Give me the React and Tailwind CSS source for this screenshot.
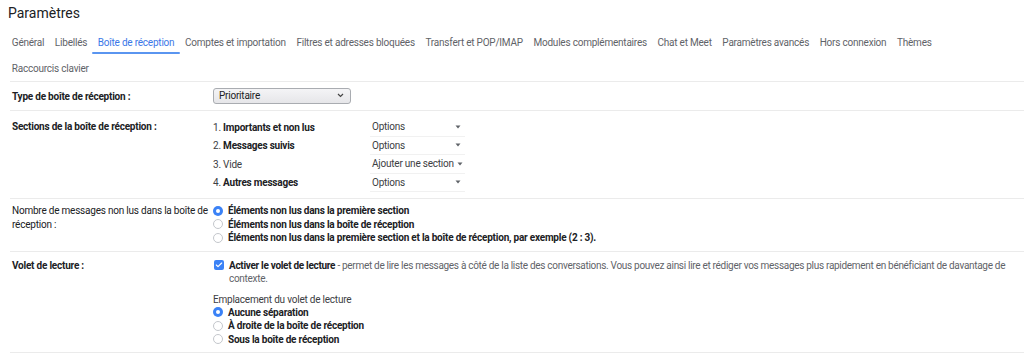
import { Check } from 'lucide-react';

const tabs = [
    'Général',
    'Libellés',
    'Boîte de réception',
    'Comptes et importation',
    'Filtres et adresses bloquées',
    'Transfert et POP/IMAP',
    'Modules complémentaires',
    'Chat et Meet',
    'Paramètres avancés',
    'Hors connexion',
    'Thèmes',
];

const sections = [
    { n: '1.', label: 'Importants et non lus', bold: true, action: 'Options' },
    { n: '2.', label: 'Messages suivis', bold: true, action: 'Options' },
    { n: '3.', label: 'Vide', bold: false, action: 'Ajouter une section' },
    { n: '4.', label: 'Autres messages', bold: true, action: 'Options' },
];

function Tab({ label, active }) {
    return (
        <div className={`relative h-[26px] px-[5.3px] flex items-center whitespace-nowrap ${active ? 'text-[#3b78e7]' : 'text-[#5f6368]'}`}>
            {label}
            {active && <div className="absolute left-0 right-0 bottom-[1px] h-[2px] bg-[#5a95f0] rounded-full" />}
        </div>
    );
}

function Radio({ checked }) {
    return checked ? (
        <span className="w-[10px] h-[10px] rounded-full bg-[#3b82f6] flex items-center justify-center shrink-0">
            <span className="w-[4px] h-[4px] rounded-full bg-white" />
        </span>
    ) : (
        <span className="w-[10px] h-[10px] rounded-full border border-[#c4c7cc] bg-white shrink-0" />
    );
}

function RadioRow({ checked, children }) {
    return (
        <div className="h-[13.5px] flex items-center">
            <Radio checked={checked} />
            <span className="ml-[5px] font-bold text-[#202124] whitespace-nowrap">{children}</span>
        </div>
    );
}

function Caret() {
    return (
        <svg width="6" height="4" viewBox="0 0 6 4" className="shrink-0 ml-[3px]">
            <path d="M0.5 0.5 L5.5 0.5 L3 3.5 Z" fill="#5f6368" />
        </svg>
    );
}

export default function App() {
    return (
        <div className="w-[1024px] h-[357px] overflow-hidden bg-white font-['Roboto',sans-serif] text-[10px] tracking-[-0.22px] text-[#202124]">
            <div className="pl-[8px] pt-[3px] h-[29px] text-[14px] leading-[20px] tracking-normal text-[#202124]">Paramètres</div>

            <div className="ml-[10px] border-b border-[#ebebeb]">
                <div className="flex -ml-[3.5px]">
                    {tabs.map(t => (
                        <Tab key={t} label={t} active={t === 'Boîte de réception'} />
                    ))}
                </div>
                <div className="flex -ml-[3.5px]">
                    <Tab label="Raccourcis clavier" />
                </div>
            </div>

            <div className="ml-[10px]">
                {/* Type de boîte */}
                <div className="h-[29px] flex items-center border-b border-[#ebebeb]">
                    <div className="w-[203px] pl-[2px] font-bold">Type de boîte de réception :</div>
                    <div className="w-[138px] h-[16px] mt-[-1px] flex items-center justify-between pl-[5px] pr-[6px] border border-[#a9acb1] rounded-[3px] bg-gradient-to-b from-[#f4f4f6] to-[#e6e6e9]">
                        <span>Prioritaire</span>
                        <svg width="7" height="5" viewBox="0 0 7 5">
                            <path d="M1 1 L3.5 3.5 L6 1" fill="none" stroke="#444" strokeWidth="1.2" />
                        </svg>
                    </div>
                </div>

                {/* Sections */}
                <div className="flex pt-[7px] pb-[6px] border-b border-[#ebebeb]">
                    <div className="w-[203px] pl-[2px] font-bold leading-[18.5px]">Sections de la boîte de réception :</div>
                    <div className="flex flex-col">
                        {sections.map(s => (
                            <div key={s.n} className="h-[18.5px] flex items-center">
                                <div className="w-[157px] whitespace-nowrap">
                                    <span className="text-[#3c4043]">{s.n} </span>
                                    <span className={s.bold ? 'font-bold' : 'text-[#3c4043]'}>{s.label}</span>
                                </div>
                                <div className="w-[95px] h-full flex items-center justify-between pl-[2px] pr-[4px] border-b border-[#f1f1f1] text-[#3c4043]">
                                    <span className="whitespace-nowrap">{s.action}</span>
                                    <Caret />
                                </div>
                            </div>
                        ))}
                    </div>
                </div>

                {/* Nombre de messages non lus */}
                <div className="flex pt-[5px] pb-[6.5px] border-b border-[#ebebeb]">
                    <div className="w-[203px] pl-[2px] leading-[13.5px]">Nombre de messages non lus dans la boîte de réception :</div>
                    <div className="flex flex-col">
                        <RadioRow checked>Éléments non lus dans la première section</RadioRow>
                        <RadioRow>Éléments non lus dans la boîte de réception</RadioRow>
                        <RadioRow>Éléments non lus dans la première section et la boîte de réception, par exemple (2 : 3).</RadioRow>
                    </div>
                </div>

                {/* Volet de lecture */}
                <div className="flex pt-[6.5px] pb-[6px] border-b border-[#ebebeb]">
                    <div className="w-[204px] pl-[2px] font-bold leading-[13px]">Volet de lecture :</div>
                    <div className="flex flex-col">
                        <div className="flex items-start">
                            <span className="mt-[1.5px] w-[10px] h-[10px] rounded-[2px] bg-[#3b82f6] flex items-center justify-center shrink-0">
                                <Check size={8} strokeWidth={3.5} color="white" />
                            </span>
                            <p className="ml-[5px] w-[785px] leading-[13px] tracking-[-0.3px] text-[#5f6368]">
                                <span className="font-bold text-[#202124]">Activer le volet de lecture</span> - permet de lire les messages à côté de la liste des conversations. Vous pouvez ainsi lire et rédiger vos messages plus rapidement en bénéficiant de davantage de contexte.
                            </p>
                        </div>
                        <div className="mt-[8px] -ml-[1px] leading-[13px] text-[#3c4043]">Emplacement du volet de lecture</div>
                        <div className="-ml-[1px]">
                            <RadioRow checked>Aucune séparation</RadioRow>
                            <RadioRow>À droite de la boîte de réception</RadioRow>
                            <RadioRow>Sous la boîte de réception</RadioRow>
                        </div>
                    </div>
                </div>
            </div>
        </div>
    );
}
